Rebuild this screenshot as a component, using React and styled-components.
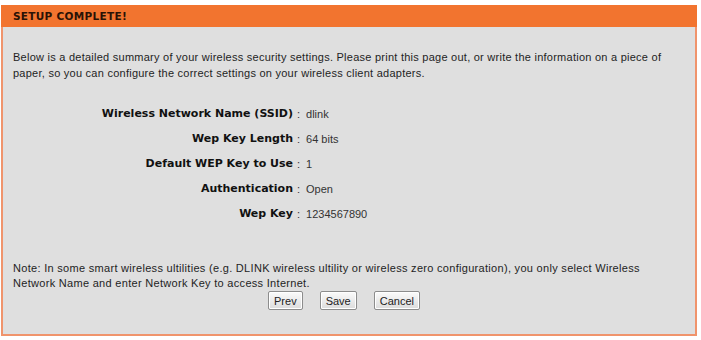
import React from "react";
import styled, { createGlobalStyle } from "styled-components";

const summary = [
  { label: "Wireless Network Name (SSID)", value: "dlink" },
  { label: "Wep Key Length", value: "64 bits" },
  { label: "Default WEP Key to Use", value: "1" },
  { label: "Authentication", value: "Open" },
  { label: "Wep Key", value: "1234567890" },
];

const GlobalStyle = createGlobalStyle`
  html, body {
    margin: 0;
    padding: 0;
    background: #ffffff;
  }
  body {
    font-family: "Liberation Sans", Arial, sans-serif;
    font-size: 11px;
    color: #1e1e1e;
  }
`;

const Panel = styled.div`
  box-sizing: border-box;
  width: 696px;
  height: 331px;
  margin: 5px 0 0 1px;
  background: #dfdfdf;
  border: 2px solid #f0946c;
  border-top: none;
  display: flex;
  flex-direction: column;
`;

const Header = styled.h1`
  margin: 0 -2px;
  height: 22px;
  padding: 0 12px;
  background: #f2742f;
  font-family: "DejaVu Sans", Verdana, sans-serif;
  font-size: 10.5px;
  font-weight: bold;
  letter-spacing: 0.3px;
  line-height: 22px;
  color: #2a1206;
`;

const Body = styled.div`
  padding: 22px 10px 0 10px;
  display: flex;
  flex-direction: column;
`;

const Copy = styled.p`
  margin: ${(p) => p.$gap || 0}px 0 0 0;
  line-height: ${(p) => p.$line || 16}px;
  letter-spacing: ${(p) => p.$spacing || 0.25}px;
`;

const Summary = styled.div`
  display: grid;
  grid-template-columns: 280px auto;
  grid-auto-rows: 25px;
  align-items: center;
  margin-top: 20px;
`;

const Label = styled.span`
  text-align: right;
  font-family: "DejaVu Sans", Verdana, sans-serif;
  font-weight: bold;
  font-size: 11px;
  color: #111;
`;

const Value = styled.span`
  padding-left: 4px;
  color: #333;
  &::before {
    content: ":";
    margin-right: 6px;
  }
`;

const Actions = styled.div`
  display: flex;
  justify-content: center;
  gap: 17px;
  margin-top: 0;
  padding-right: 10px;
`;

const Button = styled.button`
  height: 19px;
  padding: 0 5px;
  font-family: "Liberation Sans", Arial, sans-serif;
  font-size: 11px;
  color: #222;
  background: linear-gradient(#fbfbfb, #dcdcdc);
  border: 1px solid #8c8c8c;
  border-radius: 2px;
  box-shadow: inset 0 0 0 1px #ffffff;
`;

export default function App() {
  return (
    <>
      <GlobalStyle />
      <Panel>
        <Header>SETUP COMPLETE!</Header>
        <Body>
          <Copy>
            Below is a detailed summary of your wireless security settings. Please print this page
            out, or write the information on a piece of
            <br />
            paper, so you can configure the correct settings on your wireless client adapters.
          </Copy>
          <Summary>
            {summary.map((row) => (
              <React.Fragment key={row.label}>
                <Label>{row.label}</Label>
                <Value>{row.value}</Value>
              </React.Fragment>
            ))}
          </Summary>
          <Copy $gap={35} $line={15} $spacing={0.3}>
            Note: In some smart wireless ultilities (e.g. DLINK wireless ultility or wireless zero
            configuration), you only select Wireless
            <br />
            Network Name and enter Network Key to access Internet.
          </Copy>
          <Actions>
            <Button>Prev</Button>
            <Button>Save</Button>
            <Button>Cancel</Button>
          </Actions>
        </Body>
      </Panel>
    </>
  );
}
